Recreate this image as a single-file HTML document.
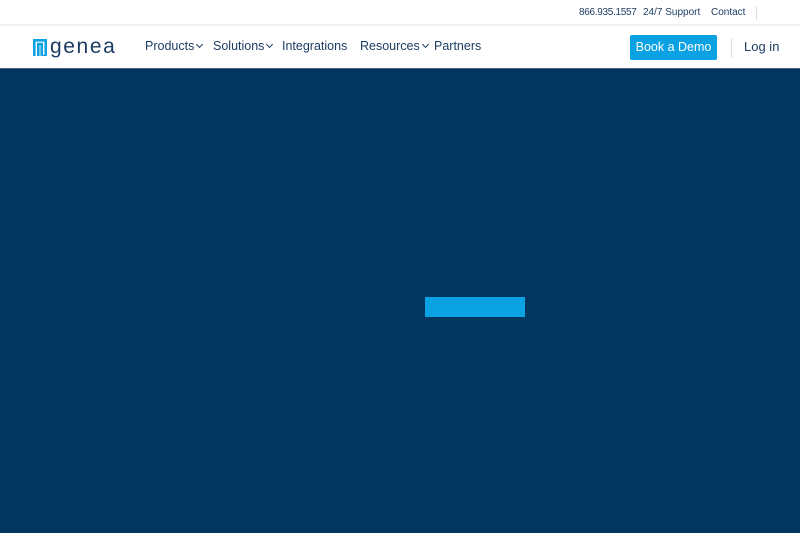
<!DOCTYPE html>
<html><head><meta charset="utf-8"><style>
*{margin:0;padding:0;box-sizing:border-box}
body{width:800px;height:533px;overflow:hidden;font-family:"Liberation Sans",sans-serif;background:#003660}
.top{background:#fff;position:relative;border-bottom:2px solid #f0f0f0;height:26px}
.top span{position:absolute;top:7px;font-size:10px;color:#1d3d63}
.nav{height:43px;background:#fff;position:relative;border-bottom:1px solid #4a5f78}
.nav .m{position:absolute;top:13px;font-size:12.5px;color:#1d3d63}
.chev{display:inline-block;width:5px;height:5px;border-right:1.3px solid #1d3d63;border-bottom:1.3px solid #1d3d63;transform:rotate(45deg);margin-left:3px;position:relative;top:-3px}
.btn{position:absolute;left:630px;top:9px;width:87px;height:25px;background:#0aa2e2;color:#fff;font-size:12.5px;text-align:center;line-height:25px;border-radius:2px}
.sep{position:absolute;left:731px;top:12px;width:1px;height:20px;background:#ddd}
.hero{position:absolute;left:425px;top:297px;width:100px;height:20px;background:#0aa2e2}
</style></head><body>
<div class="top">
<span style="left:579px;letter-spacing:-0.3px">866.935.1557</span>
<span style="left:643px">24/7 Support</span>
<span style="left:711px">Contact</span>
<div style="position:absolute;left:756px;top:6px;width:1px;height:14px;background:#ddd"></div>
</div>
<div class="nav">
<svg style="position:absolute;left:33px;top:13px" width="14" height="17" viewBox="0 0 14 17"><path d="M1.3 17V1.3H12.7V17H8.7V5H5.3V17" fill="none" stroke="#12a4e2" stroke-width="2.6"/></svg>
<span style="position:absolute;left:50px;top:9px;font-size:21px;color:#1d3d63;letter-spacing:1.6px">genea</span>
<span class="m" style="left:145px">Products<i class="chev"></i></span>
<span class="m" style="left:213px">Solutions<i class="chev"></i></span>
<span class="m" style="left:282px">Integrations</span>
<span class="m" style="left:360px">Resources<i class="chev"></i></span>
<span class="m" style="left:434px">Partners</span>
<div class="btn">Book a Demo</div>
<div class="sep"></div>
<span class="m" style="left:744px;font-size:13px">Log in</span>
</div>
<div class="hero"></div>
</body></html>
